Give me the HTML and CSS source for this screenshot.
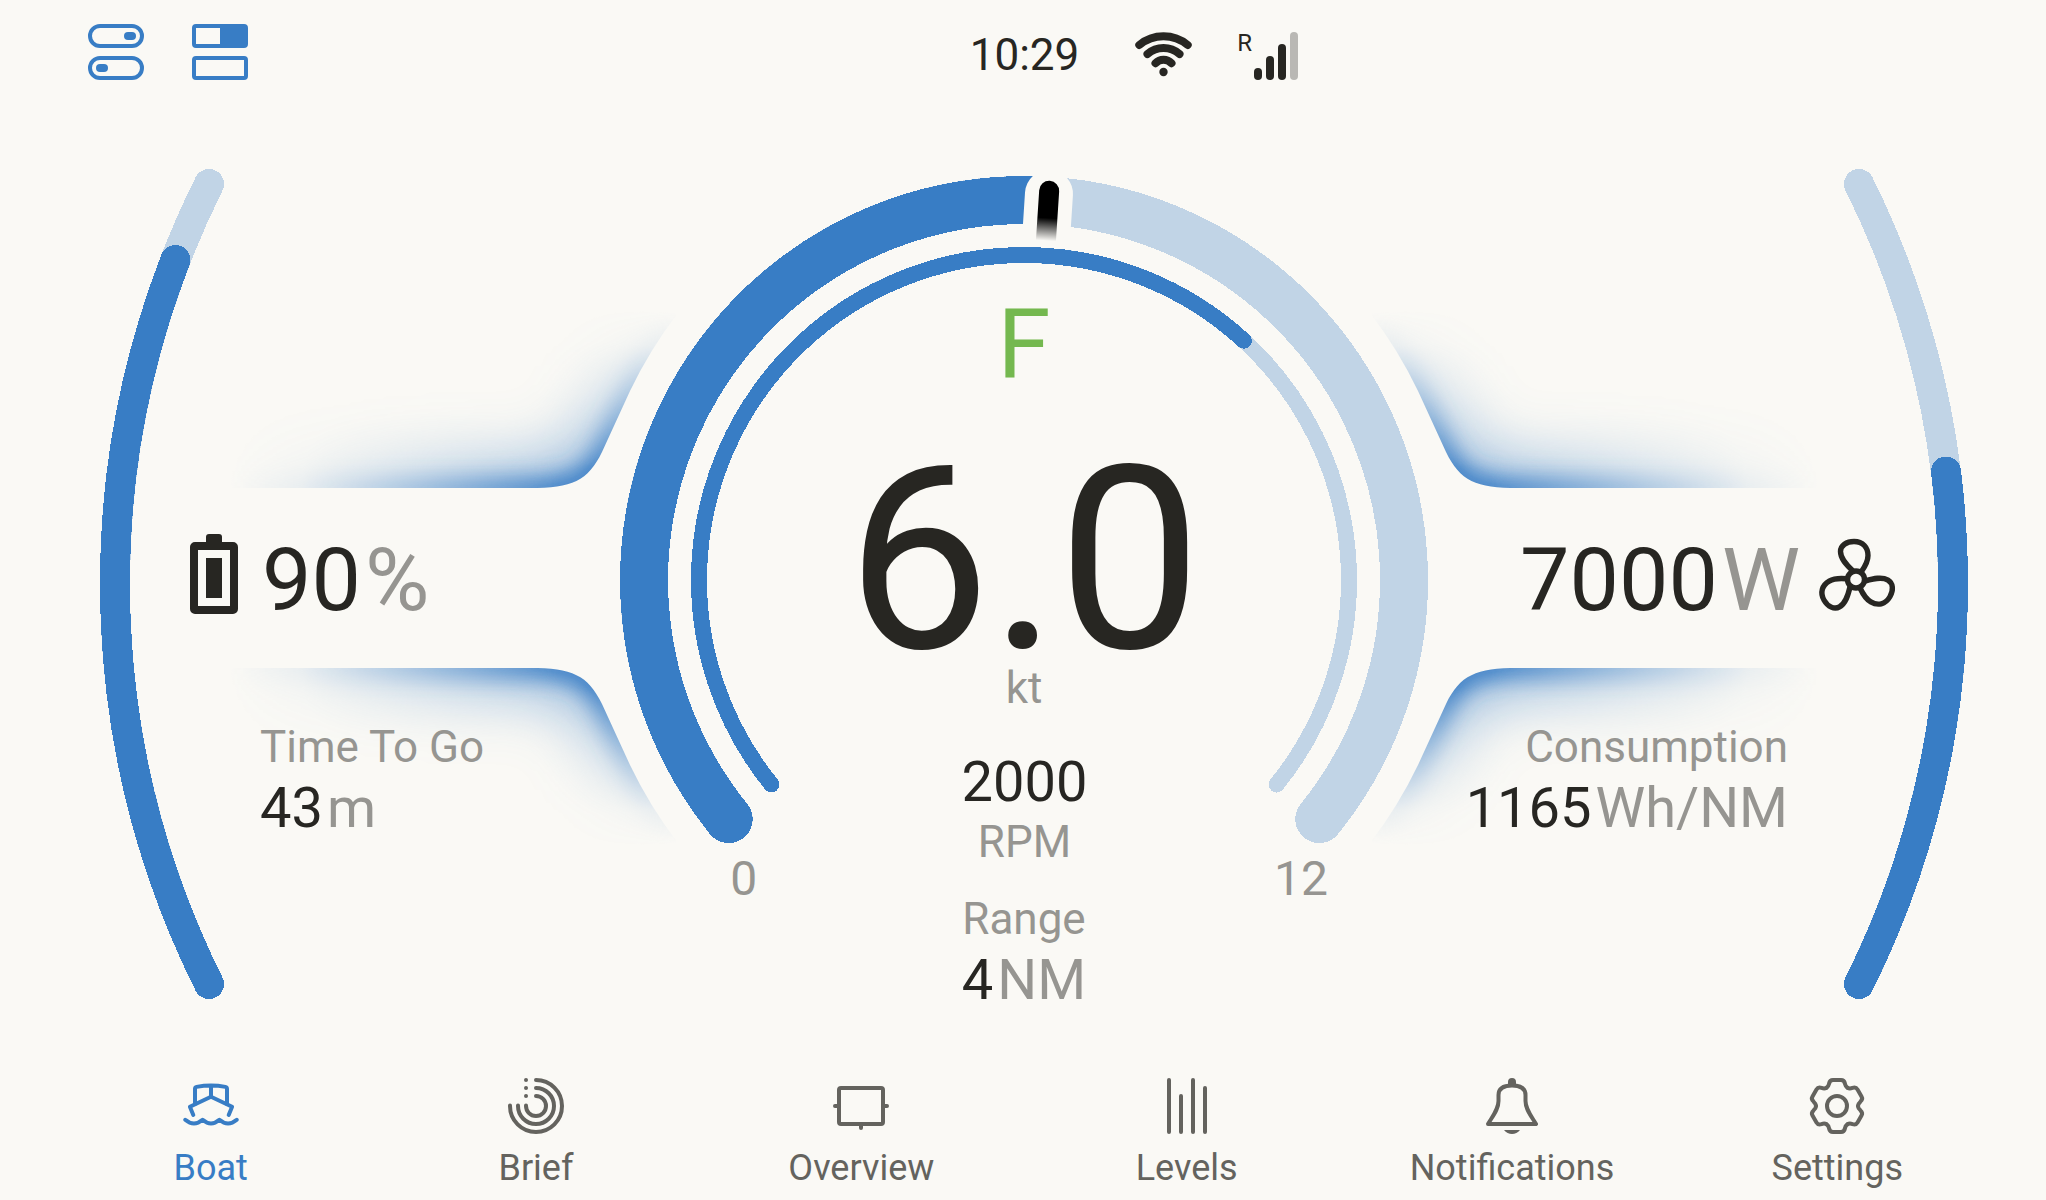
FILE: index.html
```html
<!DOCTYPE html>
<html lang="en">
<head>
    <meta charset="UTF-8">
    <meta name="viewport" content="width=device-width, initial-scale=1.0">
    <title>Boat</title>
    <link rel="stylesheet" href="styles.css">
</head>
<body>
    <div class="screen">
        <header class="topbar">
            <div class="shortcuts">
                <svg width="56" height="56" viewBox="0 0 56 56">
                    <g class="line">
                        <rect x="2" y="2" width="52" height="20" rx="10"/>
                        <rect x="2" y="34" width="52" height="20" rx="10"/>
                    </g>
                    <rect x="36" y="8" width="12" height="8" rx="4" fill="currentColor"/>
                    <rect x="8" y="40" width="12" height="8" rx="4" fill="currentColor"/>
                </svg>
                <svg width="56" height="56" viewBox="0 0 56 56">
                    <g class="line">
                        <rect x="2" y="2" width="52" height="20" rx="2"/>
                        <rect x="2" y="34" width="52" height="20" rx="2"/>
                    </g>
                    <path d="M28 2H54V22H28Z" fill="currentColor"/>
                </svg>
            </div>
            <div class="clock">10:29</div>
            <div class="status">
                <svg width="57" height="44" viewBox="0 0 57 44">
                    <g class="line wifi">
                        <path d="M4.3 13A38 38 0 0 1 52.7 13"/>
                        <path d="M12.5 22A24.3 24.3 0 0 1 44.5 22"/>
                        <path d="M20.5 31.2A11 11 0 0 1 36.5 31.2"/>
                    </g>
                    <circle cx="28.5" cy="40" r="4.2" fill="currentColor"/>
                </svg>
                <span class="roaming">R</span>
                <svg width="44" height="48" viewBox="0 0 44 48" fill="currentColor">
                    <rect x="0" y="36" width="8" height="12" rx="4"/>
                    <rect x="12" y="24" width="8" height="24" rx="4"/>
                    <rect x="24" y="12" width="8" height="36" rx="4"/>
                    <rect x="36" y="0" width="8" height="48" rx="4" fill="#b9b8b4"/>
                </svg>
            </div>
        </header>

        <main class="stage">
            <svg class="gauges" width="2048" height="956" viewBox="0 104 2048 956">
                <defs>
                    <clipPath id="outside">
                        <path d="M140 250V488H530C572 488 588 481 602 452L630 391A437 437 0 0 1 678 313V250Z"/>
                    </clipPath>
                    <filter id="soft" filterUnits="userSpaceOnUse" x="0" y="150" width="900" height="500">
                        <feGaussianBlur stdDeviation="11"/>
                    </filter>
                    <filter id="softer" filterUnits="userSpaceOnUse" x="0" y="150" width="900" height="500">
                        <feGaussianBlur stdDeviation="32"/>
                    </filter>
                    <radialGradient id="fade" gradientUnits="userSpaceOnUse" cx="0" cy="0" r="1" gradientTransform="translate(585 482) scale(355 175)">
                        <stop offset="0.08" stop-color="#fff"/>
                        <stop offset="0.5" stop-color="#fff" stop-opacity="0.46"/>
                        <stop offset="0.8" stop-color="#fff" stop-opacity="0.1"/>
                        <stop offset="1" stop-color="#fff" stop-opacity="0"/>
                    </radialGradient>
                    <mask id="falloff" maskUnits="userSpaceOnUse" x="140" y="250" width="600" height="300">
                        <rect x="140" y="250" width="600" height="300" fill="url(#fade)"/>
                    </mask>
                    <linearGradient id="needleFade" gradientUnits="userSpaceOnUse" x1="0" y1="180" x2="0" y2="240">
                        <stop offset="0.62" stop-color="#000"/>
                        <stop offset="1" stop-color="#000" stop-opacity="0"/>
                    </linearGradient>
                    <g id="glow" clip-path="url(#outside)">
                        <g mask="url(#falloff)" fill="none" stroke="#387dc5">
                            <path filter="url(#softer)" stroke-width="64" opacity="0.5" d="M100 488H530C572 488 588 481 602 452L630 391A437 437 0 0 1 700 286"/>
                            <path filter="url(#soft)" stroke-width="28" d="M100 492H530C574 492 592 484 606 454L634 393A433 433 0 0 1 704 288"/>
                        </g>
                    </g>
                </defs>

                <use href="#glow"/>
                <use href="#glow" transform="translate(0 1156) scale(1 -1)"/>
                <use href="#glow" transform="translate(2048 0) scale(-1 1)"/>
                <use href="#glow" transform="translate(2048 1156) scale(-1 -1)"/>

                <!-- battery and power side arcs -->
                <g class="arc side">
                    <path class="track" d="M209 984A898 898 0 0 1 209 184"/>
                    <path class="value" d="M209 984A898 898 0 0 1 175.4 260"/>
                    <path class="track" d="M1859 984A898 898 0 0 0 1859 184"/>
                    <path class="value" d="M1859 984A898 898 0 0 0 1946 471.5"/>
                </g>

                <!-- speed -->
                <g class="arc speed">
                    <path class="track" d="M728.7 819.1A380 380 0 1 1 1319.3 819.1"/>
                    <path class="value butt" d="M1048.5 200.8A380 380 0 0 0 728.7 819.1"/>
                    <circle cx="728.7" cy="819.1" r="24" fill="#387dc5" stroke="none"/>
                </g>

                <!-- rpm, 2000 of 3000 -->
                <g class="arc rpm">
                    <path class="track" d="M771.4 784.5A325 325 0 1 1 1276.6 784.5"/>
                    <path class="value" pathLength="3000" stroke-dasharray="1995 4000" d="M771.4 784.5A325 325 0 1 1 1276.6 784.5"/>
                </g>

                <g transform="rotate(3.7 1024 580)">
                    <path d="M1000 236V193A24 24 0 0 1 1048 193V236Z" fill="#faf9f5"/>
                    <path d="M1014 241V190A10 10 0 0 1 1034 190V241Z" fill="url(#needleFade)"/>
                </g>

                <text class="scale" x="743.7" y="895">0</text>
                <text class="scale" x="1301" y="895">12</text>
            </svg>

            <section class="panel left">
                <div class="headline">
                    <svg width="48" height="80" viewBox="0 0 48 80">
                        <rect x="4" y="12" width="40" height="64" rx="1" fill="none" stroke="currentColor" stroke-width="8"/>
                        <path d="M16 10V3Q16 0 19 0H29Q32 0 32 3V10Z" fill="currentColor"/>
                        <rect x="16" y="24" width="16" height="40" fill="currentColor"/>
                    </svg>
                    <div class="big">90<span class="unit">%</span></div>
                </div>
                <div class="detail">
                    <div class="label">Time To Go</div>
                    <div class="number">43<span class="unit">m</span></div>
                </div>
            </section>

            <section class="center">
                <div class="gear">F</div>
                <div class="speed-value">6.0</div>
                <div class="label">kt</div>
                <div class="number rpm-value">2000</div>
                <div class="label rpm-label">RPM</div>
                <div class="label range-label">Range</div>
                <div class="number">4<span class="unit">NM</span></div>
            </section>

            <section class="panel right">
                <div class="headline">
                    <div class="big">7000<span class="unit">W</span></div>
                    <svg width="80" height="80" viewBox="-40 -45.5 80 80">
                        <defs>
                            <path id="blade" d="M-3 -8.5C-10 -15 -15.5 -21 -15.5 -28C-15.5 -34 -9.5 -38 -2 -38C7 -38 12 -32 12 -24C12 -18 9 -13 5.5 -8"/>
                        </defs>
                        <g fill="none" stroke="currentColor" stroke-width="5.4">
                            <circle r="8.5"/>
                            <use href="#blade"/>
                            <use href="#blade" transform="rotate(120)"/>
                            <use href="#blade" transform="rotate(240)"/>
                        </g>
                    </svg>
                </div>
                <div class="detail">
                    <div class="label">Consumption</div>
                    <div class="number">1165<span class="unit">Wh/NM</span></div>
                </div>
            </section>
        </main>

        <nav class="tabs">
            <a class="tab active">
                <svg class="line" width="56" height="56" viewBox="0 0 56 56">
                    <path d="M10.3 37L6.9 28.8L28 18.8L49.1 28.8L45.7 37"/>
                    <path d="M12 26V10.8Q12 9.2 13.6 8.9Q28 6.3 42.4 8.9Q44 9.2 44 10.8V26M28 8V18"/>
                    <path d="M2.2 41.8Q11 49.2 19.6 41.8Q28 49.2 36.4 41.8Q45 49.2 53.8 41.8"/>
                </svg>
                <span>Boat</span>
            </a>
            <a class="tab">
                <svg class="line" width="56" height="56" viewBox="0 0 56 56">
                    <path d="M28 2A26 26 0 1 1 2 28V27.5"/>
                    <path d="M28 10A18 18 0 1 1 10 28V27.5"/>
                    <path d="M28 18A10 10 0 1 1 18 28V27.5"/>
                    <path d="M18 2h.01M18 10h.01M18 18h.01"/>
                </svg>
                <span>Brief</span>
            </a>
            <a class="tab">
                <svg class="line" width="56" height="56" viewBox="0 0 56 56">
                    <rect x="6" y="10" width="44" height="36" rx="2"/>
                    <path d="M2 28H6M50 28H54M28 46V50"/>
                </svg>
                <span>Overview</span>
            </a>
            <a class="tab">
                <svg class="line" width="56" height="56" viewBox="0 0 56 56">
                    <path d="M10 2V54M22 18V54M34 2V54M46 10V54"/>
                </svg>
                <span>Levels</span>
            </a>
            <a class="tab">
                <svg class="line" width="56" height="56" viewBox="0 0 56 56">
                    <path d="M4 46C9.5 37 14.5 31 14.5 23V17C14.5 11 19 7.5 28 7.5S41.5 11 41.5 17V23C41.5 31 46.5 37 52 46Z"/>
                    <path d="M24 7V4A4 4 0 0 1 32 4V7ZM20 52H36C34 54.5 31 56 28 56S22 54.5 20 52Z" fill="currentColor" stroke="none"/>
                </svg>
                <span>Notifications</span>
            </a>
            <a class="tab">
                <svg class="line" width="56" height="56" viewBox="-28 -28 56 56">
                    <defs>
                        <path id="tooth" d="M-10.5 -18.2C-8.5 -19.4 -8.3 -20.5 -7.9 -22.5C-7.3 -25.5 -6 -26 -4 -26H4C6 -26 7.3 -25.5 7.9 -22.5C8.3 -20.5 8.5 -19.4 10.5 -18.2"/>
                    </defs>
                    <circle r="10"/>
                    <use href="#tooth"/>
                    <use href="#tooth" transform="rotate(60)"/>
                    <use href="#tooth" transform="rotate(120)"/>
                    <use href="#tooth" transform="rotate(180)"/>
                    <use href="#tooth" transform="rotate(240)"/>
                    <use href="#tooth" transform="rotate(300)"/>
                </svg>
                <span>Settings</span>
            </a>
        </nav>
    </div>
</body>
</html>
```

FILE: styles.css
```css
body,html{
    margin: 0;
    padding: 0;
    height: 100%;
    overflow: hidden;
    background: #faf9f5;
}

body{
    font-family: Roboto, "Liberation Sans", sans-serif;
    color: #272622;
}

svg{
    display: block;
    overflow: visible;
    flex: none;
}

.screen{
    width: 2048px;
    height: 1200px;
    display: flex;
    flex-direction: column;
}

.line{
    fill: none;
    stroke: currentColor;
    stroke-width: 4;
    stroke-linecap: round;
    stroke-linejoin: round;
}

/* top bar */
.topbar{
    height: 104px;
    box-sizing: border-box;
    padding: 24px 88px 0;
    display: grid;
    grid-template-columns: 1fr auto 1fr;
    align-items: start;
}

.shortcuts{
    display: flex;
    gap: 48px;
    color: #387dc5;
}

.clock{
    font-size: 44px;
    line-height: 62px;
    padding-left: 1px;
}

.status{
    display: flex;
    align-items: flex-start;
    padding: 8px 0 0 56px;
}

.wifi{
    stroke-width: 8;
}

.roaming{
    font-size: 24px;
    line-height: 22px;
    margin: 0 2px 0 45px;
}

/* gauges with the readings stacked on the same grid row */
.stage{
    height: 956px;
    display: grid;
    grid-template-columns: 620px 808px 620px;
}

.gauges{
    grid-area: 1 / 1 / 2 / 4;
}

.arc{
    fill: none;
    stroke-linecap: round;
    shape-rendering: crispEdges;
}

.side{
    stroke-width: 30;
}

.speed{
    stroke-width: 48;
}

.rpm{
    stroke-width: 16;
}

.track{
    stroke: #c1d4e6;
}

.value{
    stroke: #387dc5;
}

.butt{
    stroke-linecap: butt;
}

.scale{
    font-size: 48px;
    fill: #969591;
    text-anchor: middle;
}

.panel{
    grid-row: 1;
    padding-top: 430px;
}

.left{
    grid-column: 1;
    padding-left: 190px;
}

.right{
    grid-column: 3;
    padding-right: 152px;
    text-align: right;
}

.headline{
    display: flex;
    align-items: flex-start;
    gap: 24px;
}

.right .headline{
    justify-content: flex-end;
    gap: 16px;
}

.big{
    font-size: 88px;
    line-height: 92px;
}

.unit{
    color: #969591;
    margin-left: 4px;
}

.detail{
    margin-top: 99px;
}

.left .detail{
    padding-left: 70px;
}

.right .detail{
    padding-right: 108px;
}

.label{
    font-size: 44px;
    line-height: 44px;
    color: #969591;
}

.number{
    font-size: 56px;
    line-height: 56px;
}

.label + .number{
    margin-top: 11px;
}

.center{
    grid-area: 1 / 2;
    padding-top: 192px;
    text-align: center;
}

.gear{
    font-size: 96px;
    line-height: 96px;
    color: #74b84f;
}

.speed-value{
    font-size: 256px;
    line-height: 210px;
    margin-top: 64px;
}

.center .rpm-value{
    margin-top: 44px;
    padding-left: 1px;
}

.rpm-label{
    margin-top: 10px;
    padding-left: 1px;
}

.range-label{
    margin-top: 33px;
}

/* bottom tabs */
.tabs{
    height: 140px;
    box-sizing: border-box;
    padding: 18px 48px 0;
    display: grid;
    grid-template-columns: repeat(6, 1fr);
}

.tab{
    display: flex;
    flex-direction: column;
    align-items: center;
    gap: 13px;
    color: #64635e;
    font-size: 36px;
    line-height: 42px;
}

.tab.active{
    color: #387dc5;
}
```
